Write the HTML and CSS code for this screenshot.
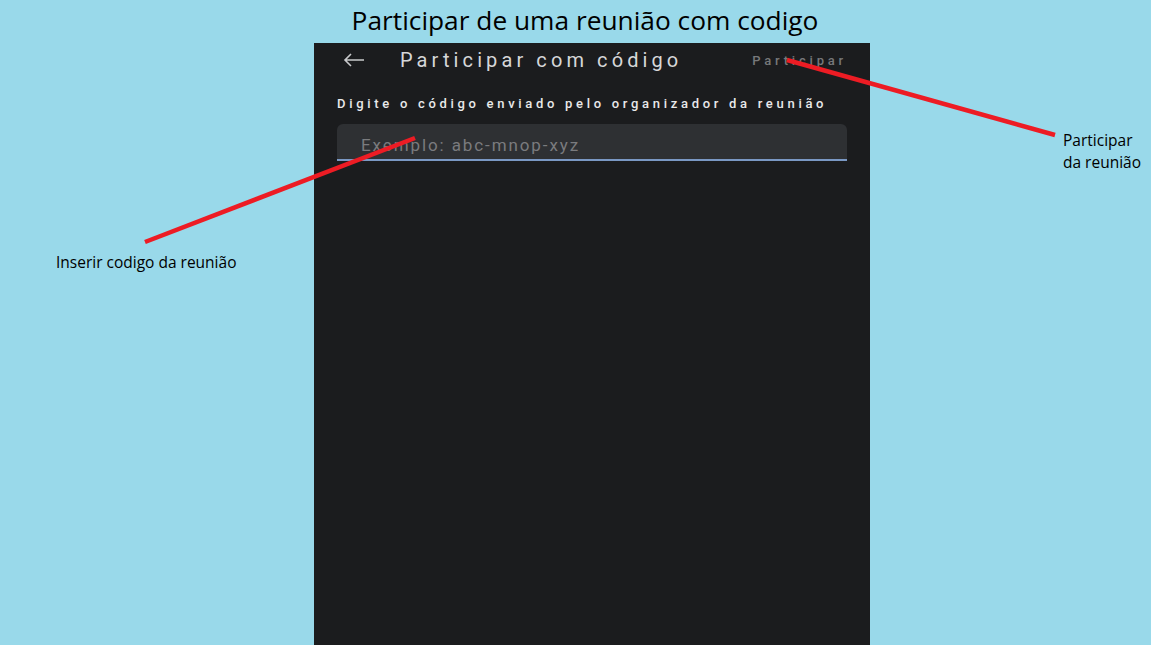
FILE: index.html
```html
<!DOCTYPE html>
<html lang="pt-BR">
<head>
<meta charset="utf-8">
<title>Participar de uma reunião com codigo</title>
<link rel="stylesheet" href="styles.css">
</head>
<body>
<div class="canvas">
  <h1 class="page-title">Participar de uma reunião com codigo</h1>
  <div class="stage">
    <div class="side side-left">
      <p class="note note-left">Inserir codigo da reunião</p>
    </div>
    <div class="phone">
      <div class="appbar">
        <svg class="back" width="22" height="14" viewBox="0 0 22 14" aria-hidden="true">
          <path d="M21 7H2M8 1L2 7l6 6" fill="none" stroke="#c9cacc" stroke-width="1.6"/>
        </svg>
        <span class="appbar-title">Participar com código</span>
        <span class="appbar-action">Participar</span>
      </div>
      <p class="hint">Digite o código enviado pelo organizador da reunião</p>
      <div class="field">
        <span class="placeholder">Exemplo: abc-mnop-xyz</span>
      </div>
    </div>
    <div class="side side-right">
      <p class="note note-right">Participar<br>da reunião</p>
    </div>
  </div>
  <svg class="arrows" width="1151" height="645" viewBox="0 0 1151 645" aria-hidden="true">
    <line x1="787" y1="60" x2="1055" y2="135" stroke="#ed1c24" stroke-width="4.5"/>
    <line x1="145" y1="242" x2="415" y2="138" stroke="#ed1c24" stroke-width="4.5"/>
  </svg>
</div>
</body>
</html>
```

FILE: styles.css
```css
* { box-sizing: border-box; }
html, body {
  margin: 0;
  padding: 0;
  width: 1151px;
  height: 645px;
  overflow: hidden;
  background: #99d9ea;
}
.canvas {
  position: relative;
  width: 1151px;
  height: 645px;
  display: flex;
  flex-direction: column;
}
.page-title {
  margin: 0;
  height: 43px;
  padding-top: 2px;
  text-align: center;
  font-family: "Open Sans", "Liberation Sans", sans-serif;
  font-weight: 400;
  font-size: 26.3px;
  line-height: 36px;
  color: #000;
  padding-left: 19px;
}
.stage {
  flex: 1;
  display: grid;
  grid-template-columns: 314px 556px 1fr;
}
.side { position: relative; }
.note {
  margin: 0;
  font-family: "Open Sans", "Liberation Sans", sans-serif;
  font-size: 15.5px;
  line-height: 22px;
  color: #000;
}
.note-left {
  padding-top: 208px;
  padding-left: 56px;
}
.note-right {
  padding-top: 86px;
  padding-left: 193px;
}
.phone {
  background: #1b1c1e;
  padding: 0 23px 0 23px;
  font-family: Roboto, "Noto Sans", sans-serif;
}
.appbar {
  height: 34px;
  display: flex;
  align-items: center;
}
.back {
  margin-left: 6px;
  margin-right: 35px;
}
.appbar-title {
  color: #d6d7d9;
  font-size: 20px;
  letter-spacing: 4.1px;
  flex: 1;
}
.appbar-action {
  color: #77787a;
  font-size: 13px;
  font-weight: 500;
  letter-spacing: 3.8px;
  margin-right: 0;
}
.hint {
  margin: 19px 0 0 0;
  color: #e9e9ea;
  font-size: 13px;
  font-weight: 500;
  letter-spacing: 3.7px;
  line-height: 16px;
}
.field {
  margin-top: 12px;
  height: 37px;
  background: #2e3033;
  border-radius: 6px 6px 0 0;
  border-bottom: 2px solid #7a98c4;
  display: flex;
  align-items: center;
  padding-left: 24px;
  padding-top: 7px;
}
.placeholder {
  color: #7a7b7e;
  font-size: 17px;
  letter-spacing: 1.9px;
}
.arrows {
  position: absolute;
  left: 0;
  top: 0;
  pointer-events: none;
}
```
